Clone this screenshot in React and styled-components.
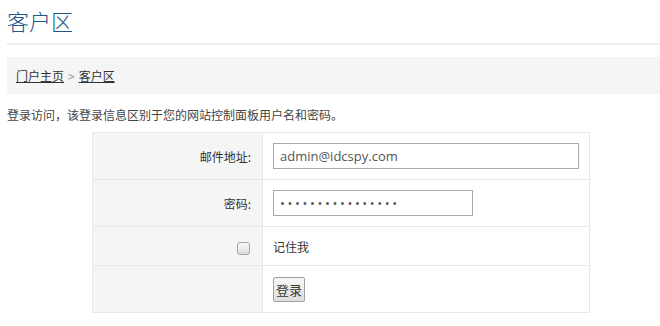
import React from 'react';
import styled, { createGlobalStyle } from 'styled-components';

const GlobalStyle = createGlobalStyle`
  body {
    margin: 0;
    background: #fff;
    font-family: "Noto Sans CJK SC", "Open Sans", sans-serif;
    color: #333;
  }
`;

const Page = styled.div`
  padding: 0 0 0 7px;
`;

const Title = styled.h1`
  margin: 0;
  padding: 6px 0 9px;
  font-size: 22px;
  font-weight: 300;
  line-height: 28px;
  color: #21558a;
  border-bottom: 2px solid #eeeeee;
`;

const Breadcrumb = styled.div`
  margin-top: 12px;
  background: #f5f5f5;
  height: 37px;
  display: flex;
  align-items: center;
  padding-left: 9px;
  font-size: 12px;
  gap: 4px;
`;

const Crumb = styled.a`
  color: #333;
  text-decoration: underline;
`;

const Sep = styled.span`
  color: #999;
`;

const Intro = styled.p`
  margin: 13px 0 0;
  font-size: 12px;
  line-height: 16px;
  color: #444;
`;

const FormTable = styled.table`
  margin: 9px 0 0 85px;
  width: 498px;
  border-collapse: collapse;
  font-size: 12px;
`;

const Row = styled.tr`
  height: ${p => p.$h}px;
`;

const Label = styled.td`
  width: 170px;
  background: #f5f5f5;
  border: 1px solid #e8e8e8;
  text-align: right;
  padding: 0 11px 0 0;
  color: #333;
  box-sizing: border-box;
`;

const Field = styled.td`
  border: 1px solid #e8e8e8;
  padding: 0 0 0 10px;
  color: #333;
`;

const Input = styled.input`
  display: block;
  box-sizing: border-box;
  width: ${p => p.$w}px;
  height: 26px;
  border: 1px solid #a8a8a8;
  padding: 0 6px;
  font-family: "Open Sans", sans-serif;
  font-size: 13px;
  color: #555;
  outline: none;
  letter-spacing: ${p => (p.type === 'password' ? '2.6px' : 'normal')};
`;

const Check = styled.span`
  display: inline-block;
  width: 11px;
  height: 11px;
  border: 1px solid #a5a5a5;
  border-radius: 3px;
  background: linear-gradient(#fafafa, #dcdcdc);
  vertical-align: middle;
  margin-right: 1px;
`;

const Button = styled.button`
  height: 25px;
  width: 32px;
  padding: 0;
  border: 1px solid #a0a0a0;
  border-radius: 2px;
  background: linear-gradient(#f7f7f7, #dedede);
  font-family: "Noto Sans CJK SC", sans-serif;
  font-size: 13px;
  color: #333;
`;

export default function App() {
  return (
    <Page>
      <GlobalStyle />
      <Title>客户区</Title>
      <Breadcrumb>
        <Crumb href="#">门户主页</Crumb>
        <Sep>&gt;</Sep>
        <Crumb href="#">客户区</Crumb>
      </Breadcrumb>
      <Intro>登录访问，该登录信息区别于您的网站控制面板用户名和密码。</Intro>
      <FormTable>
        <tbody>
          <Row $h={47}>
            <Label>邮件地址:</Label>
            <Field><Input $w={306} defaultValue="admin@idcspy.com" /></Field>
          </Row>
          <Row $h={47}>
            <Label>密码:</Label>
            <Field><Input $w={200} type="password" defaultValue="0123456789abcdef" /></Field>
          </Row>
          <Row $h={39}>
            <Label><Check /></Label>
            <Field>记住我</Field>
          </Row>
          <Row $h={47}>
            <Label />
            <Field><Button>登录</Button></Field>
          </Row>
        </tbody>
      </FormTable>
    </Page>
  );
}
